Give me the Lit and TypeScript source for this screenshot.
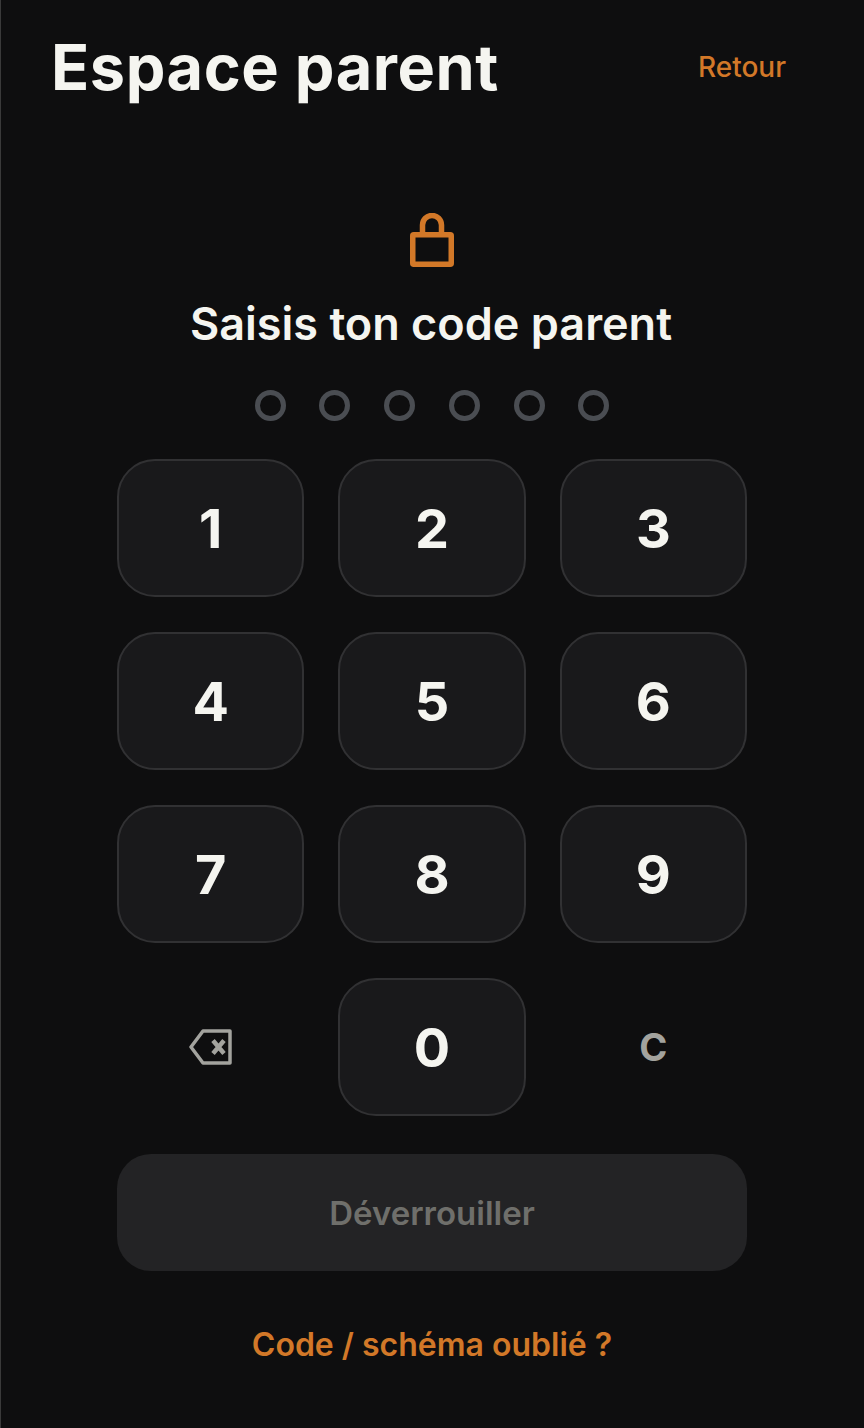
import { LitElement, html, css } from 'lit';
import { customElement } from 'lit/decorators.js';

const DIGITS = ['1', '2', '3', '4', '5', '6', '7', '8', '9'];

@customElement('app-root')
export class AppRoot extends LitElement {
  static styles = css`
    :host {
      display: block;
      height: 1428px;
      box-sizing: border-box;
      background: #0e0e0f;
      box-shadow: inset 1px 0 0 #3a3a3a;
      color: #f5f5f0;
      font-family: 'Inter', 'Liberation Sans', sans-serif;
      overflow: hidden;
    }
    .header {
      display: flex;
      justify-content: space-between;
      align-items: center;
      height: 134px;
      padding: 0 78px 0 51px;
    }
    h1 {
      margin: 0;
      font-size: 63px;
      font-weight: 700;
      letter-spacing: 0.55px;
      line-height: 134px;
    }
    .back {
      color: #d27828;
      font-size: 28px;
      font-weight: 500;
    }
    .body {
      display: flex;
      flex-direction: column;
      align-items: center;
      padding-top: 79px;
    }
    .lock {
      display: block;
      width: 44px;
      height: 54px;
    }
    h2 {
      margin: 28px 2px 0 0;
      font-size: 45px;
      font-weight: 600;
      line-height: 58px;
    }
    .dots {
      display: flex;
      gap: 33.7px;
      margin-top: 37px;
    }
    .dot {
      width: 31px;
      height: 31px;
      box-sizing: border-box;
      border: 5px solid #4a4d52;
      border-radius: 50%;
    }
    .pad {
      display: grid;
      width: 630px;
      grid-template-columns: repeat(3, 1fr);
      grid-auto-rows: 138px;
      column-gap: 34px;
      row-gap: 35px;
      margin-top: 38px;
    }
    .key {
      display: flex;
      align-items: center;
      justify-content: center;
      box-sizing: border-box;
      border: 2px solid #313133;
      border-radius: 38px;
      background: #19191b;
      font-size: 54px;
      font-weight: 700;
    }
    .key.bare {
      border: none;
      background: none;
      color: #a3a39e;
    }
    .key.bare.c {
      font-size: 38px;
    }
    .key svg {
      display: block;
      width: 43px;
      height: 36px;
    }
    .unlock {
      display: flex;
      align-items: center;
      justify-content: center;
      width: 630px;
      height: 117px;
      margin-top: 38px;
      border-radius: 34px;
      background: #232325;
      color: #6f6f6b;
      font-size: 33px;
      font-weight: 600;
    }
    .forgot {
      margin-top: 54px;
      color: #d27828;
      font-size: 32px;
      font-weight: 600;
      line-height: 40px;
    }
  `;

  render() {
    return html`
      <div class="header">
        <h1>Espace parent</h1>
        <span class="back">Retour</span>
      </div>
      <div class="body">
        <svg class="lock" viewBox="0 0 44 54" fill="none" stroke="#d27828" stroke-width="5.5" stroke-linejoin="round">
          <rect x="2.75" y="21.75" width="38.5" height="29.5" rx="1" />
          <path d="M12.5 20v-8a9.5 9.5 0 0 1 19 0v8" />
        </svg>
        <h2>Saisis ton code parent</h2>
        <div class="dots">${[0, 1, 2, 3, 4, 5].map(() => html`<div class="dot"></div>`)}</div>
        <div class="pad">
          ${DIGITS.map((d) => html`<div class="key">${d}</div>`)}
          <div class="key bare">
            <svg viewBox="0 0 43 36" fill="none" stroke="#a3a39e" stroke-width="3.5" stroke-linejoin="round">
              <path d="M14 2H41V34H14L2 18Z" />
              <path d="M24 11.5l11 13M35 11.5l-11 13" stroke-width="4.5" />
            </svg>
          </div>
          <div class="key">0</div>
          <div class="key bare c">C</div>
        </div>
        <div class="unlock">Déverrouiller</div>
        <div class="forgot">Code / schéma oublié ?</div>
      </div>
    `;
  }
}
